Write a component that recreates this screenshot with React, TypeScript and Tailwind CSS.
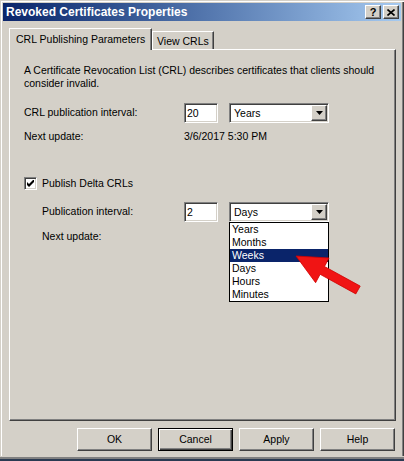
import React from "react";

const raised =
  "border border-t-white border-l-white border-r-[#404040] border-b-[#404040] shadow-[inset_-1px_-1px_0_#808080]";
const sunken =
  "border border-t-[#808080] border-l-[#808080] border-r-white border-b-white shadow-[inset_1px_1px_0_#404040,inset_-1px_-1px_0_#d4d0c8]";

function Select({ value, open }: { value: string; open?: boolean }) {
  const items = ["Years", "Months", "Weeks", "Days", "Hours", "Minutes"];
  return (
    <div className={`relative w-[100px] h-[20px] bg-white flex items-center ${sunken} p-[1px]`}>
      <div className="flex-1 pl-[3px] leading-[13px]">{value}</div>
      <div className={`w-[16px] h-[16px] bg-[#d4d0c8] flex items-center justify-center ${raised}`}>
        <svg width="7" height="4" viewBox="0 0 7 4">
          <polygon points="0,0 7,0 3.5,4" fill="#000" />
        </svg>
      </div>
      {open && (
        <div className="absolute left-[-1px] top-[19px] w-[100px] border border-black bg-white z-20">
          {items.map((it) => (
            <div
              key={it}
              className={`h-[13px] leading-[13px] pl-[2px] ${
                it === "Weeks" ? "bg-[#0a246a] text-white" : "text-black"
              }`}
            >
              {it}
            </div>
          ))}
        </div>
      )}
    </div>
  );
}

function Field({ value }: { value: string }) {
  return (
    <div className={`w-[34px] h-[20px] bg-white ${sunken} pl-[2px] flex items-center leading-[13px]`}>
      {value}
    </div>
  );
}

export default function App() {
  return (
    <div className="relative w-[404px] h-[461px] bg-[#d4d0c8] overflow-hidden font-['Liberation_Sans',Arial,sans-serif] text-[10.5px] text-black flex flex-col pt-[3px] pl-[3px] pr-[3px] shadow-[inset_1px_1px_0_#d4d0c8,inset_2px_2px_0_#ffffff,inset_-1px_0_0_#404040,inset_-2px_0_0_#808080]">
      {/* Title bar */}
      <div className="h-[18px] bg-linear-to-r from-[#0a246a] to-[#a6caf0] flex items-center pl-[3px] pr-[2px]">
        <div className="flex-1 text-white font-bold text-[12px] leading-[14px]">
          Revoked Certificates Properties
        </div>
        <div className="flex gap-[2px]">
          <div className={`w-[16px] h-[14px] bg-[#d4d0c8] flex items-center justify-center ${raised}`}>
            <span className="font-bold text-[11px] leading-[11px]">?</span>
          </div>
          <div className={`w-[16px] h-[14px] bg-[#d4d0c8] flex items-center justify-center ${raised}`}>
            <svg width="8" height="7" viewBox="0 0 8 7">
              <path d="M0.5 0.5 L7.5 6.5 M7.5 0.5 L0.5 6.5" stroke="#000" strokeWidth="1.6" />
            </svg>
          </div>
        </div>
      </div>

      {/* Tabs */}
      <div className="ml-[6px] mt-[7px] flex items-end h-[21px]">
        <div className="relative z-10 w-[143px] h-[22px] -mb-[1px] bg-[#d4d0c8] border-t border-l border-t-white border-l-white border-r border-r-[#404040] shadow-[inset_-1px_0_0_#808080] pl-[6px] pt-[4px] leading-[13px]">
          CRL Publishing Parameters
        </div>
        <div className="w-[62px] h-[18px] border-t border-l border-t-white border-l-white border-r border-r-[#404040] shadow-[inset_-1px_0_0_#808080] pl-[4px] pt-[3px] leading-[13px]">
          View CRLs
        </div>
      </div>

      {/* Panel */}
      <div className="ml-[6px] w-[387px] h-[372px] border border-t-white border-l-white border-r-[#404040] border-b-[#404040] shadow-[inset_-1px_-1px_0_#808080] pl-[14px] pt-[14px] flex flex-col relative">
        <p className="leading-[13px] w-[360px]">
          A Certificate Revocation List (CRL) describes certificates that clients should consider invalid.
        </p>
        <div className="mt-[13px] flex items-center h-[20px]">
          <div className="w-[160px]">CRL publication interval:</div>
          <Field value="20" />
          <div className="ml-[11px]">
            <Select value="Years" />
          </div>
        </div>
        <div className="mt-[7px] flex items-center h-[13px] leading-[13px]">
          <div className="w-[160px]">Next update:</div>
          <div>3/6/2017 5:30 PM</div>
        </div>

        <div className="mt-[34px] flex items-center h-[13px] leading-[13px]">
          <div className={`w-[13px] h-[13px] bg-white ${sunken} flex items-center justify-center`}>
            <svg width="7" height="7" viewBox="0 0 7 7">
              <path d="M0 2 L0 5 L2 7 L7 2 L7 -1 L2 4 Z" fill="#000" />
            </svg>
          </div>
          <div className="ml-[5px]">Publish Delta CRLs</div>
        </div>

        <div className="mt-[12px] pl-[18px] flex items-center h-[20px]">
          <div className="w-[142px]">Publication interval:</div>
          <Field value="2" />
          <div className="ml-[11px]">
            <Select value="Days" open />
          </div>
        </div>
        <div className="mt-[8px] pl-[18px] flex items-center h-[13px] leading-[13px]">
          <div className="w-[142px]">Next update:</div>
        </div>
      </div>

      {/* Buttons */}
      <div className="ml-[6px] w-[387px] mt-[7px] flex justify-end gap-[6px] pr-[1px]">
        {["OK", "Cancel", "Apply", "Help"].map((b) =>
          b === "Cancel" ? (
            <div
              key={b}
              className="w-[75px] h-[23px] border border-black shadow-[inset_1px_1px_0_#ffffff,inset_-1px_-1px_0_#404040,inset_-2px_-2px_0_#808080] flex items-center justify-center"
            >
              {b}
            </div>
          ) : (
            <div key={b} className={`w-[75px] h-[23px] ${raised} flex items-center justify-center`}>
              {b}
            </div>
          )
        )}
      </div>

      <div className="flex-1" />
      <div className="-ml-[3px] -mr-[3px] h-[3px] bg-[#808080] shadow-[inset_0_1px_0_#d4d0c8]" />
      <div className="-ml-[3px] -mr-[3px] h-[2px] bg-[#2a3a52]" />

      {/* Red arrow */}
      <svg className="absolute left-0 top-0 pointer-events-none z-30" width="404" height="461">
        <polygon
          points="296,256 329,258 324.5,266.5 360.2,286.1 355.8,293.9 320.1,274.3 315.6,282.7"
          fill="#f01414"
          stroke="#d00000"
          strokeWidth="0.8"
        />
      </svg>
    </div>
  );
}
